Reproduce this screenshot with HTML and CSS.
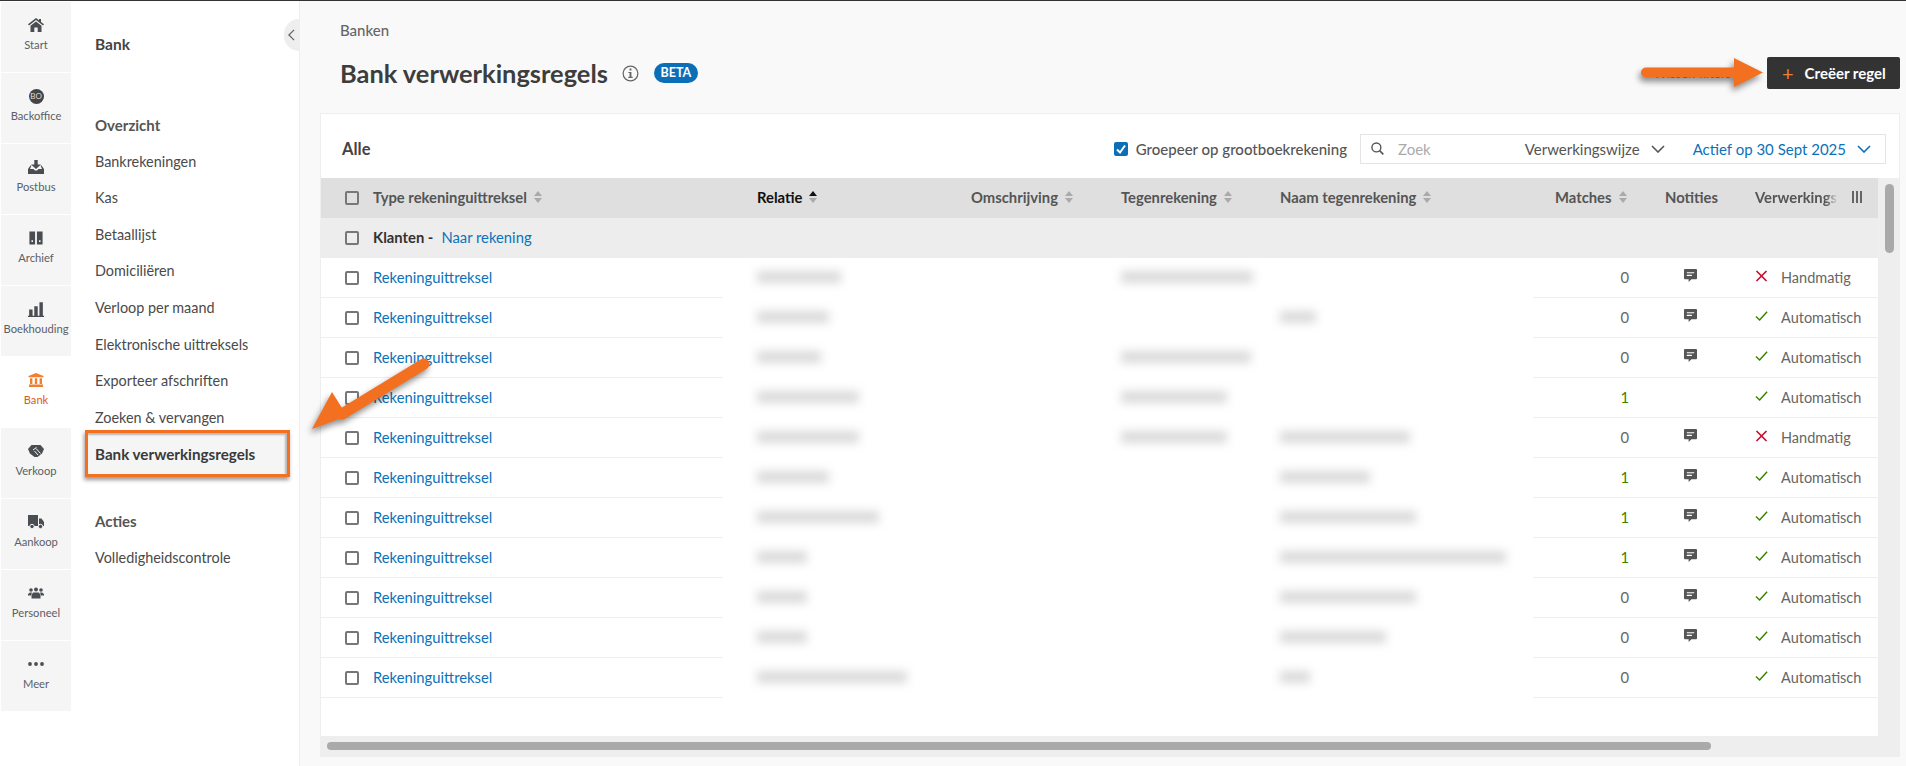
FILE: index.html
```html
<!DOCTYPE html>
<html lang="nl">
<head>
<meta charset="utf-8">
<title>Bank verwerkingsregels</title>
<link rel="stylesheet" href="styles.css">
</head>
<body>
<svg class="sprite" xmlns="http://www.w3.org/2000/svg">
  <symbol id="sort" viewBox="0 0 8 12"><path d="M4 0 8 5H0z"/><path d="M4 12 0 7h8z"/></symbol>
  <symbol id="note" viewBox="0 0 14 14"><path fill="#555" d="M1 0h12a1 1 0 0 1 1 1v9a1 1 0 0 1-1 1H8l-3 3v-3H1a1 1 0 0 1-1-1V1a1 1 0 0 1 1-1z"/><path fill="#fff" d="M3 3.5h8v1.2H3zM3 6.3h5.5v1.2H3z"/></symbol>
  <symbol id="ok" viewBox="0 0 14 12"><path fill="none" stroke="#3f7f00" stroke-width="1.6" d="M1 6.5 5 10.3 13 1.5"/></symbol>
  <symbol id="no" viewBox="0 0 12 12"><path fill="none" stroke="#c8102e" stroke-width="1.7" d="M1 1 11 11M11 1 1 11"/></symbol>
  <symbol id="chev" viewBox="0 0 14 8"><path fill="none" stroke="currentColor" stroke-width="1.6" d="M1 1l6 6 6-6"/></symbol>
</svg>

<div class="page">
  <nav class="rail">
    <a class="rail-item">
      <svg class="rail-icon" viewBox="0 0 16 14"><path d="M8 0 0 6.2l1 1.2L8 2l7 5.4 1-1.2-3-2.3V1h-2v1.3z"/><path d="M8 3.4 2.5 7.7V14h3.8V9.5h3.4V14h3.8V7.7z"/></svg>
      <span>Start</span>
    </a>
    <a class="rail-item">
      <span class="bo-icon">BO</span>
      <span>Backoffice</span>
    </a>
    <a class="rail-item">
      <svg class="rail-icon" viewBox="0 0 16 14"><path d="M6.3 0h3.4v4.5H13L8 9 3 4.500h3.300z"/><path d="M2.500 5.500 0 9v5h16V9l-2.500-3.500h-1L14 9h-3.500L9 10.500H7L5.500 9H2L3.500 5.500z"/></svg>
      <span>Postbus</span>
    </a>
    <a class="rail-item">
      <svg class="rail-icon" viewBox="-1.500 -1 17 16"><path fill-rule="evenodd" d="M0 0h6v14H0zM2.200 9.500v1.800h1.600V9.500zM8 0h6v14H8zM10.200 9.500v1.800h1.600V9.500z"/></svg>
      <span>Archief</span>
    </a>
    <a class="rail-item">
      <svg class="rail-icon" viewBox="0 0 14 14"><path d="M1 7.500h3V13H1zM5.500 4.500h3V13h-3zM10 1h3v12h-3zM0 13h14v1H0z"/></svg>
      <span>Boekhouding</span>
    </a>
    <a class="rail-item is-active">
      <svg class="rail-icon" viewBox="0 0 16 14"><path d="M8 0 15.500 3v1.300H.5V3zM2 5.200h2.400v5.800H2zM6.800 5.200h2.400v5.800H6.800zM11.600 5.200H14v5.800h-2.400zM1 11.500h14V14H1z"/></svg>
      <span>Bank</span>
    </a>
    <a class="rail-item">
      <svg class="rail-icon" viewBox="0 0 16 12"><path d="M3.500 0h9L16 4l-2 4.500L9.500 12h-3L2 8.500 0 4z"/><path fill="none" stroke="#f5f5f5" stroke-width="1" d="M5 5 8.500 2.500M8 3.500l4.500 5M6.500 6 10 10"/></svg>
      <span>Verkoop</span>
    </a>
    <a class="rail-item">
      <svg class="rail-icon" viewBox="0 0 16 14"><path d="M0 0h10v11H0zM11 3.500h2.500L16 7v4h-5z"/><circle cx="4" cy="11.500" r="2.200" stroke="#f5f5f5"/><circle cx="12.500" cy="11.500" r="2.200" stroke="#f5f5f5"/></svg>
      <span>Aankoop</span>
    </a>
    <a class="rail-item">
      <svg class="rail-icon" viewBox="0 0 16 11"><circle cx="3" cy="2.500" r="1.800"/><circle cx="8" cy="2" r="2"/><circle cx="13" cy="2.500" r="1.800"/><path d="M0 6.500 2 5h2L3 8H0zM16 6.500 14 5h-2l1 3h3zM5 5h6l1.500 2.500V11h-9V7.500z"/></svg>
      <span>Personeel</span>
    </a>
    <a class="rail-item">
      <svg class="rail-icon" viewBox="0 0 16 14"><circle cx="2" cy="7" r="1.900"/><circle cx="8" cy="7" r="1.900"/><circle cx="14" cy="7" r="1.900"/></svg>
      <span>Meer</span>
    </a>
  </nav>

  <aside class="sidenav">
    <button class="collapse"><svg viewBox="0 0 8 14"><path fill="none" stroke="#666" stroke-width="1.500" d="M7 1 1 7l6 6"/></svg></button>
    <h2 class="side-title">Bank</h2>
    <h3 class="side-head">Overzicht</h3>
    <a class="side-link">Bankrekeningen</a>
    <a class="side-link">Kas</a>
    <a class="side-link">Betaallijst</a>
    <a class="side-link">Domiciliëren</a>
    <a class="side-link">Verloop per maand</a>
    <a class="side-link">Elektronische uittreksels</a>
    <a class="side-link">Exporteer afschriften</a>
    <a class="side-link">Zoeken &amp; vervangen</a>
    <a class="side-link is-current"><span>Bank verwerkingsregels</span></a>
    <h3 class="side-head side-head-2">Acties</h3>
    <a class="side-link">Volledigheidscontrole</a>
  </aside>

  <main class="main">
    <div class="crumb">Banken</div>
    <header class="title-row">
      <h1 class="title">Bank verwerkingsregels</h1>
      <svg class="info" viewBox="0 0 18 18"><circle cx="9" cy="9" r="7.800" fill="none" stroke="#666" stroke-width="1.300"/><path fill="#666" d="M8 3.800h2v2H8zM6.800 7.300H10v5.200h1.300v1.300H6.700v-1.300H8V8.600H6.800z"/></svg>
      <span class="beta">BETA</span>
      <span class="spacer"></span>
      <span class="ghost">Wissen filters</span>
      <button class="create"><span class="plus">+</span>Creëer regel</button>
    </header>

    <section class="card">
      <div class="card-head">
        <div class="card-title">Alle</div>
        <label class="group-toggle"><span class="checked"><svg viewBox="0 0 14 14"><path fill="none" stroke="#fff" stroke-width="2" d="M3 7.500 6 10.500 11 3.500"/></svg></span>Groepeer op grootboekrekening</label>
        <div class="filters">
          <svg class="search" viewBox="0 0 14 14"><circle cx="5.800" cy="5.800" r="4.800" fill="none" stroke="#555" stroke-width="1.500"/><path stroke="#555" stroke-width="1.700" d="M9.300 9.300 13.300 13.300"/></svg>
          <span class="zoek">Zoek</span>
          <span class="flt">Verwerkingswijze<svg class="chev" viewBox="0 0 14 8"><use href="#chev"/></svg></span>
          <span class="flt flt-blue">Actief op 30 Sept 2025<svg class="chev" viewBox="0 0 14 8"><use href="#chev"/></svg></span>
        </div>
      </div>

      <div class="table-area">
        <div class="table">
          <div class="row row-head">
            <span class="cb"></span>
            <span class="th">Type rekeninguittreksel<svg class="sort"><use href="#sort"/></svg></span>
            <span class="th th-on">Relatie<svg class="sort sort-on" viewBox="0 0 8 12"><path fill="#111" d="M4 0 8 5H0z"/><path fill="#aaa" d="M4 12 0 7h8z"/></svg></span>
            <span class="th">Omschrijving<svg class="sort"><use href="#sort"/></svg></span>
            <span class="th">Tegenrekening<svg class="sort"><use href="#sort"/></svg></span>
            <span class="th">Naam tegenrekening<svg class="sort"><use href="#sort"/></svg></span>
            <span class="th">Matches<svg class="sort"><use href="#sort"/></svg></span>
            <span class="th">Notities</span>
            <span class="th th-last"><span class="fade">Verwerkingswijze</span><svg class="cols" viewBox="0 0 10 12"><path d="M0 0h2v12H0zM4 0h2v12H4zM8 0h2v12H8z"/></svg></span>
          </div>

          <div class="row row-group">
            <span class="cb"></span>
            <span class="group-name"><b>Klanten -</b><a class="link">Naar rekening</a></span>
          </div>

          <div class="row row-data">
            <span class="cb"></span><a class="link">Rekeninguittreksel</a>
            <span><i class="blur" style="width:84px"></i></span><span></span>
            <span><i class="blur" style="width:132px"></i></span><span></span>
            <span class="num">0</span><span class="notes"><svg class="note"><use href="#note"/></svg></span>
            <span class="status"><svg class="st"><use href="#no"/></svg>Handmatig</span>
          </div>
          <div class="row row-data">
            <span class="cb"></span><a class="link">Rekeninguittreksel</a>
            <span><i class="blur" style="width:72px"></i></span><span></span>
            <span></span><span><i class="blur" style="width:36px"></i></span>
            <span class="num">0</span><span class="notes"><svg class="note"><use href="#note"/></svg></span>
            <span class="status"><svg class="st"><use href="#ok"/></svg>Automatisch</span>
          </div>
          <div class="row row-data">
            <span class="cb"></span><a class="link">Rekeninguittreksel</a>
            <span><i class="blur" style="width:64px"></i></span><span></span>
            <span><i class="blur" style="width:130px"></i></span><span></span>
            <span class="num">0</span><span class="notes"><svg class="note"><use href="#note"/></svg></span>
            <span class="status"><svg class="st"><use href="#ok"/></svg>Automatisch</span>
          </div>
          <div class="row row-data">
            <span class="cb"></span><a class="link">Rekeninguittreksel</a>
            <span><i class="blur" style="width:102px"></i></span><span></span>
            <span><i class="blur" style="width:106px"></i></span><span></span>
            <span class="num num-on">1</span><span class="notes"></span>
            <span class="status"><svg class="st"><use href="#ok"/></svg>Automatisch</span>
          </div>
          <div class="row row-data">
            <span class="cb"></span><a class="link">Rekeninguittreksel</a>
            <span><i class="blur" style="width:102px"></i></span><span></span>
            <span><i class="blur" style="width:106px"></i></span><span><i class="blur" style="width:130px"></i></span>
            <span class="num">0</span><span class="notes"><svg class="note"><use href="#note"/></svg></span>
            <span class="status"><svg class="st"><use href="#no"/></svg>Handmatig</span>
          </div>
          <div class="row row-data">
            <span class="cb"></span><a class="link">Rekeninguittreksel</a>
            <span><i class="blur" style="width:72px"></i></span><span></span>
            <span></span><span><i class="blur" style="width:90px"></i></span>
            <span class="num num-on">1</span><span class="notes"><svg class="note"><use href="#note"/></svg></span>
            <span class="status"><svg class="st"><use href="#ok"/></svg>Automatisch</span>
          </div>
          <div class="row row-data">
            <span class="cb"></span><a class="link">Rekeninguittreksel</a>
            <span><i class="blur" style="width:122px"></i></span><span></span>
            <span></span><span><i class="blur" style="width:136px"></i></span>
            <span class="num num-on">1</span><span class="notes"><svg class="note"><use href="#note"/></svg></span>
            <span class="status"><svg class="st"><use href="#ok"/></svg>Automatisch</span>
          </div>
          <div class="row row-data">
            <span class="cb"></span><a class="link">Rekeninguittreksel</a>
            <span><i class="blur" style="width:50px"></i></span><span></span>
            <span></span><span><i class="blur" style="width:226px"></i></span>
            <span class="num num-on">1</span><span class="notes"><svg class="note"><use href="#note"/></svg></span>
            <span class="status"><svg class="st"><use href="#ok"/></svg>Automatisch</span>
          </div>
          <div class="row row-data">
            <span class="cb"></span><a class="link">Rekeninguittreksel</a>
            <span><i class="blur" style="width:50px"></i></span><span></span>
            <span></span><span><i class="blur" style="width:136px"></i></span>
            <span class="num">0</span><span class="notes"><svg class="note"><use href="#note"/></svg></span>
            <span class="status"><svg class="st"><use href="#ok"/></svg>Automatisch</span>
          </div>
          <div class="row row-data">
            <span class="cb"></span><a class="link">Rekeninguittreksel</a>
            <span><i class="blur" style="width:50px"></i></span><span></span>
            <span></span><span><i class="blur" style="width:106px"></i></span>
            <span class="num">0</span><span class="notes"><svg class="note"><use href="#note"/></svg></span>
            <span class="status"><svg class="st"><use href="#ok"/></svg>Automatisch</span>
          </div>
          <div class="row row-data">
            <span class="cb"></span><a class="link">Rekeninguittreksel</a>
            <span><i class="blur" style="width:150px"></i></span><span></span>
            <span></span><span><i class="blur" style="width:30px"></i></span>
            <span class="num">0</span><span class="notes"></span>
            <span class="status"><svg class="st"><use href="#ok"/></svg>Automatisch</span>
          </div>
        </div>
        <div class="vtrack"><div class="vthumb"></div></div>
      </div>
      <div class="htrack"><div class="hthumb"></div></div>
    </section>
  </main>
</div>

<svg class="arrow arrow-right" viewBox="0 0 130 36"><path d="M6 15.500H95" stroke="#f37021" stroke-width="10" stroke-linecap="round" fill="none"/><path fill="#f37021" d="M94 1 123 15.500 94 30z"/></svg>
<svg class="arrow arrow-down" viewBox="0 0 124 80"><path d="M114 5 32 55" stroke="#f37021" stroke-width="11" stroke-linecap="round" fill="none"/><path fill="#f37021" d="M22 33 37 57 2 70z"/></svg>
</body>
</html>
```

FILE: styles.css
```css
* { box-sizing: border-box; }
html, body { margin: 0; height: 100%; overflow: hidden; }
body {
  font-family: "Lato", "Open Sans", sans-serif;
  font-size: 14px;
  color: #444;
  background: #fff;
  border-top: 1px solid #333;
}
.sprite { display: none; }
.page { display: flex; height: 765px; }

/* rail */
.rail {
  flex: 0 0 72px;
  display: flex;
  flex-direction: column;
  gap: 1px;
  padding: 1px 1px 0;
}
.rail-item {
  height: 70px;
  background: #f5f5f5;
  display: flex;
  flex-direction: column;
  align-items: center;
  padding-top: 15px;
  font-size: 11.200px;
  line-height: 15px;
  color: #5b5f66;
}
.rail-icon { width: 16px; height: 16px; fill: #4a4d52; margin-bottom: 4px; }
.bo-icon {
  width: 15px; height: 15px; border-radius: 50%;
  background: #444; color: #ddd;
  font-size: 8px; line-height: 15px; text-align: center;
  margin: 1px 0 4px;
}
.is-active { background: #fff; color: #df5a20; }
.is-active .rail-icon { fill: #ee8030; }

/* side nav */
.sidenav {
  flex: 0 0 228px;
  position: relative;
  padding-left: 23px;
  border-right: 1px solid #eee;
  color: #4a4a4a;
}
.collapse {
  position: absolute;
  right: 0; top: 18px;
  width: 15px; height: 32px;
  padding: 0;
  border: 0;
  border-radius: 16px 0 0 16px;
  background: #eee;
  display: flex; align-items: center; justify-content: center;
}
.collapse svg { width: 7px; height: 12px; }
.side-title { margin: 33px 0 0; font-size: 15.500px; line-height: 20px; font-weight: 700; color: #444; }
.side-head { margin: 61px 0 0; font-size: 15px; line-height: 20px; font-weight: 700; color: #555; }
.side-head-2 { margin-top: 38px; }
.side-link { display: block; height: 36.600px; line-height: 36.600px; font-size: 14.400px; white-space: nowrap; }
.side-head + .side-link { margin-top: 8.600px; }
.is-current { position: relative; font-weight: 700; font-size: 15.200px; color: #3a3a3a; }
.is-current span { position: relative; z-index: 1; }
.is-current::after {
  content: "";
  position: absolute;
  left: -10px; right: 9px; top: -6px; bottom: -4px;
  background: #f5f5f5;
  border: 3px solid #f37021;
  box-shadow: -1px 3px 4px rgba(0,0,0,.4), inset -2px 2px 2px rgba(0,0,0,.25);
}

/* main */
.main {
  flex: 1;
  min-width: 0;
  background: #f9f9f9;
  padding: 19px 6px 9px 20px;
  display: flex;
  flex-direction: column;
}
.crumb { padding-left: 20px; font-size: 15px; line-height: 20px; font-weight: 500; color: #666; }
.title-row { display: flex; align-items: center; height: 32px; margin-top: 17px; padding-left: 20px; }
.title { margin: 0; font-size: 25.400px; line-height: 32px; font-weight: 700; color: #3d3d3d; }
.info { width: 17px; height: 17px; margin-left: 14px; }
.beta {
  margin-left: 15px;
  width: 44px; height: 20px;
  border-radius: 10px;
  background: #0b6fb8;
  color: #fff;
  font-size: 12.500px; font-weight: 700;
  line-height: 20px; text-align: center;
}
.spacer { flex: 1; }
.ghost { font-size: 13px; margin-right: 36px; color: #555; }
.create {
  width: 133px; height: 32px;
  border: 0; border-radius: 2px;
  background: #333;
  color: #fff;
  font: 700 15px "Lato", sans-serif;
  display: flex; align-items: center;
  padding: 0 0 0 15px;
}
.plus { color: #ee8030; font-size: 20px; font-weight: 400; line-height: 1; margin-right: 11px; }

/* card */
.card {
  flex: 1;
  min-height: 0;
  margin-top: 24px;
  background: #fff;
  border: 1px solid #eee;
  display: flex;
  flex-direction: column;
}
.card-head { display: flex; align-items: center; height: 64px; padding: 5px 13px 0 21px; flex: none; }
.card-title { flex: 1; font-size: 16.500px; font-weight: 700; color: #444; }
.group-toggle { display: flex; align-items: center; gap: 8px; font-size: 15px; font-weight: 500; color: #555; margin-right: 13px; }
.checked { width: 14px; height: 14px; border-radius: 2px; background: #0b6fb8; display: block; }
.checked svg { display: block; width: 14px; height: 14px; }
.filters {
  width: 526px; height: 30px;
  border: 1px solid #e4e4e4;
  background: #fff;
  display: flex; align-items: center;
  padding: 0 14px 0 10px;
  font-size: 15px;
}
.search { width: 13px; height: 13px; flex: none; }
.zoek { color: #aaa; margin-left: 14px; flex: 1; }
.flt { display: flex; align-items: center; gap: 11px; color: #555; margin-left: 28px; white-space: nowrap; }
.flt-blue { color: #0b72b9; }
.chev { width: 14px; height: 8px; }

/* table */
.table-area { flex: 1; min-height: 0; display: flex; }
.table { flex: 1; min-width: 0; background: #fff; font-size: 14.800px; }
.vtrack { flex: 0 0 21px; background: #eee; padding: 6px 5px 0 7px; }
.vthumb { height: 69px; border-radius: 5px; background: #aaa; }
.htrack { flex: 0 0 20px; background: #eee; padding: 6px 188px 0 6px; }
.hthumb { height: 8px; border-radius: 4px; background: #aaa; }

.row {
  display: grid;
  grid-template-columns: 52px 384px 214px 150px 159px 275px 110px 90px minmax(0, 1fr);
  align-items: center;
  height: 40px;
  padding-bottom: 2px;
}
.row-head { background: #dfdfdf; font-weight: 700; }
.row-group { background: #ededed; }
.row-data {
  background: linear-gradient(to right, #eee 402px, transparent 402px, transparent 1212px, #eee 1212px) bottom / 100% 1px no-repeat;
}
.cb {
  width: 14px; height: 14px;
  margin-left: 24px;
  border: 2px solid #777;
  border-radius: 2px;
  background: #fff;
  position: relative;
  top: 1px;
}
.row-head .cb, .row-group .cb { background: transparent; }
.th { display: flex; align-items: center; gap: 7px; color: #555; white-space: nowrap; min-width: 0; }
.th-on { color: #111; }
.sort { width: 8px; height: 12px; fill: #aaa; flex: none; }
.th-last { padding-right: 16px; gap: 14px; }
.fade {
  flex: 1; min-width: 0; overflow: hidden; white-space: nowrap;
  -webkit-mask-image: linear-gradient(to right, #000 85%, transparent 100%);
  mask-image: linear-gradient(to right, #000 85%, transparent 100%);
}
.cols { width: 10px; height: 12px; fill: #666; flex: none; }
.group-name { grid-column: 2 / -1; display: flex; gap: 8px; }
.group-name b { color: #333; }
.link { color: #0b72b9; }
.blur { display: block; height: 12px; background: #dadada; filter: blur(5px); }
.num { text-align: right; color: #666; margin-right: 36px; }
.num-on { color: #3f7f00; }
.notes { display: flex; padding-left: 19px; }
.note { width: 13px; height: 13px; margin-top: -3px; }
.status { display: flex; align-items: center; gap: 13px; color: #666; white-space: nowrap; font-size: 14.500px; }
.st { width: 13px; height: 12px; margin-top: -3px; }

/* annotations */
.arrow { position: absolute; filter: drop-shadow(-2px 4px 3px rgba(0,0,0,.45)); overflow: visible; }
.arrow-right { left: 1640px; top: 57px; width: 130px; height: 36px; }
.arrow-down { left: 310px; top: 359px; width: 124px; height: 80px; }
```
